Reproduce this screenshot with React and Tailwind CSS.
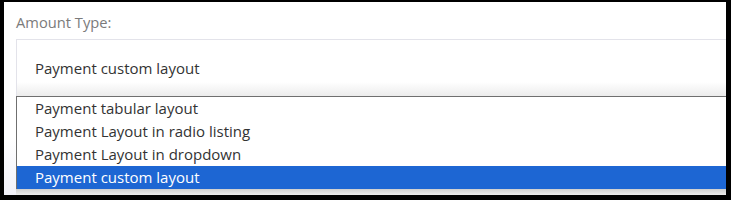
export default function App() {
  const options = [
    'Payment tabular layout',
    'Payment Layout in radio listing',
    'Payment Layout in dropdown',
    'Payment custom layout',
  ];
  const selected = 3;

  return (
    <div className="w-[731px] h-[200px] bg-black pt-[2px] pl-[4px] pr-[5px] pb-[5px] font-['Open_Sans',sans-serif]">
      <div className="flex h-full flex-col overflow-hidden bg-white bg-gradient-to-b from-white from-70% to-[#f1f1f8]">
        <div className="h-[37px] pl-[12px] pt-[11px] text-[14.7px] leading-[18px] text-[#7b7b7b]">Amount Type:</div>
        <div className="ml-[12px] flex h-[57px] items-center border border-r-0 border-b-0 border-[#e3e3ea] bg-gradient-to-b from-white from-75% to-[#ececec] pl-[18px] text-[15px] text-[#333]">
          Payment custom layout
        </div>
        <div className="ml-[12px] border border-r-0 border-b-0 border-[#6f6f6f] bg-white">
          {options.map((o, i) => (
            <div
              key={o}
              className={
                i === selected
                  ? 'h-[23px] bg-[#1d66d3] pl-[18px] text-[15px] leading-[23px] text-white'
                  : 'h-[23px] pl-[18px] text-[15px] leading-[23px] text-[#333]'
              }
            >
              {o}
            </div>
          ))}
        </div>
        <div className="ml-[12px] h-[6px] bg-gradient-to-b from-[#cfcfcf] to-[#ececec]" />
      </div>
    </div>
  );
}
